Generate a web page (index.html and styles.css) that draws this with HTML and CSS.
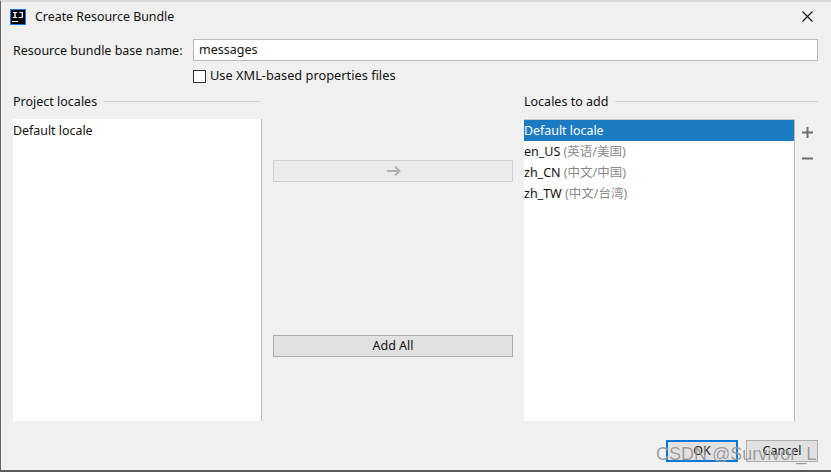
FILE: index.html
```html
<!DOCTYPE html>
<html lang="en">
<head>
<meta charset="utf-8">
<title>Create Resource Bundle</title>
<link rel="stylesheet" href="styles.css">
</head>
<body>
<div class="dialog">
  <header class="titlebar">
    <svg class="app-icon" width="16" height="16" viewBox="0 0 16 16">
      <rect x="0" y="0" width="16" height="16" fill="#087cfa"/>
      <rect x="1" y="1" width="14" height="14" fill="#000"/>
      <rect x="2" y="12" width="6" height="1" fill="#fff"/>
      <path d="M3 3h4v1H5.7v4H7v1H3V8h1.3V4H3zM9.5 3H13v4.8c0 .8-.6 1.2-1.4 1.2H8.5V8h2.6c.4 0 .6-.2 .6-.5V4H9.5z" fill="#fff"/>
    </svg>
    <span class="title">Create Resource Bundle</span>
    <svg class="close" width="11" height="11" viewBox="0 0 11 11"><path d="M.5 .5l10 10M10.5 .5l-10 10" stroke="#111" stroke-width="1.1" fill="none"/></svg>
  </header>
  <main class="content">
    <div class="name-row">
      <label class="name-label">Resource bundle base name:</label>
      <div class="text-input">messages</div>
    </div>
    <div class="check-row">
      <span class="checkbox"></span>
      <span class="check-label">Use XML-based properties files</span>
    </div>
    <div class="columns">
      <section class="col col-left">
        <div class="sep"><span>Project locales</span><i></i></div>
        <div class="list list-left">
          <div class="item">Default locale</div>
        </div>
      </section>
      <div class="middle">
        <button class="btn btn-off" type="button">
          <svg class="arrow" width="14" height="10" viewBox="0 0 14 10"><path d="M0 5h12.5M8 .8L12.5 5 8 9.2" stroke="#b0b0b0" stroke-width="1.9" fill="none"/></svg>
        </button>
        <button class="btn" type="button">Add All</button>
      </div>
      <section class="col col-right">
        <div class="sep"><span>Locales to add</span><i></i></div>
        <div class="list-wrap">
          <div class="list list-top">
            <div class="item selected">Default locale</div>
            <div class="item">en_US <span class="dim">(英语/美国)</span></div>
            <div class="item">zh_CN <span class="dim">(中文/中国)</span></div>
            <div class="item">zh_TW <span class="dim">(中文/台湾)</span></div>
          </div>
          <div class="tools">
            <svg width="11" height="11" viewBox="0 0 11 11"><path d="M5.5 0v11M0 5.5h11" stroke="#6e6e6e" stroke-width="2" fill="none"/></svg>
            <svg width="11" height="11" viewBox="0 0 11 11"><path d="M0 5.5h11" stroke="#6e6e6e" stroke-width="2" fill="none"/></svg>
          </div>
        </div>
      </section>
    </div>
    <footer class="actions">
      <button class="btn small default" type="button">OK</button>
      <button class="btn small" type="button">Cancel</button>
    </footer>
  </main>
  <div class="watermark">CSDN @Survivor_L</div>
</div>
</body>
</html>
```
FILE: styles.css
```css
* { box-sizing: border-box; }
html, body { margin: 0; padding: 0; }
body {
  width: 831px;
  height: 472px;
  overflow: hidden;
  font-family: "Noto Sans", "Noto Sans CJK SC", sans-serif;
  font-size: 12.5px;
  color: #111;
  background: #f0f0f0;
}
.dialog {
  position: relative;
  width: 831px;
  height: 472px;
  background: #f0f0f0;
  border-top: 2px solid #dcdcdc;
  border-left: 1px solid #646464;
  border-bottom: 2px solid #5a5a5a;
  display: flex;
  flex-direction: column;
}
.titlebar {
  height: 29px;
  display: flex;
  align-items: center;
  padding: 0 18px 0 9px;
  flex: none;
}
.app-icon { flex: none; }
.title { margin-left: 9px; flex: 1; font-size: 12.4px; }
.close { flex: none; }
.content {
  flex: 1;
  display: flex;
  flex-direction: column;
  padding: 8px 13px 8px 12px;
  min-height: 0;
}
.name-row { display: flex; align-items: center; height: 22px; }
.name-label { width: 180px; flex: none; }
.text-input {
  flex: 1;
  height: 22px;
  background: #fff;
  border: 1px solid #b9b9b9;
  padding-left: 5px;
  line-height: 19px;
}
.check-row {
  display: flex;
  align-items: center;
  gap: 4px;
  height: 13px;
  margin: 9px 0 0 180px;
}
.check-label { font-size: 12.8px; line-height: 15px; padding-bottom: 2px; }
.checkbox {
  width: 13px;
  height: 13px;
  background: #fff;
  border: 1px solid #333;
  flex: none;
}
.columns { display: flex; flex: 1; min-height: 0; margin-top: 10px; }
.col { display: flex; flex-direction: column; }
.col-left { width: 249px; flex: none; }
.col-right { flex: 1; margin-left: 11px; }
.sep { display: flex; align-items: center; gap: 7px; height: 16px; flex: none; }
.sep i { flex: 1; height: 1px; background: #cdcdcd; display: block; }
.col-left .sep i { margin-right: 2px; }
.list {
  background: #fff;
  border-right: 1px solid #b9b9b9;
  margin-top: 10px;
  height: 302px;
  flex: none;
}
.list-left { padding-top: 1px; }
.list-left .item { font-size: 12.4px; }
.list-top { width: 271px; border-top: 1px solid #c8c8c8; }
.list-wrap { display: flex; }
.item { height: 21px; line-height: 21px; white-space: nowrap; }
.selected { background: #1a7bc2; color: #fff; font-size: 12.4px; }
.dim { color: #8a8a8a; }
.tools {
  display: flex;
  flex-direction: column;
  gap: 15px;
  margin: 18px 0 0 7px;
}
.tools svg { display: block; }
.middle {
  width: 240px;
  flex: none;
  margin-left: 11px;
  display: flex;
  flex-direction: column;
  gap: 153px;
  padding-top: 67px;
}
.btn {
  display: flex;
  align-items: center;
  justify-content: center;
  height: 22px;
  width: 100%;
  padding: 0 0 1px;
  background: #e1e1e1;
  border: 1px solid #adadad;
  font: inherit;
  color: #111;
  flex: none;
}
.btn-off { background: #ebebeb; border-color: #cfcfcf; }
.arrow { margin-left: 1px; }
.actions {
  display: flex;
  justify-content: flex-end;
  gap: 8px;
  margin-top: auto;
}
.small { width: 72px; }
.default { border: 2px solid #0078d7; }
.watermark {
  position: absolute;
  left: 655px;
  top: 439px;
  width: 163px;
  font-family: "Liberation Sans", sans-serif;
  font-size: 18px;
  line-height: 26px;
  color: rgba(90, 90, 90, 0.6);
  white-space: nowrap;
  text-shadow: 0 0 1px rgba(255,255,255,.8);
}
```
